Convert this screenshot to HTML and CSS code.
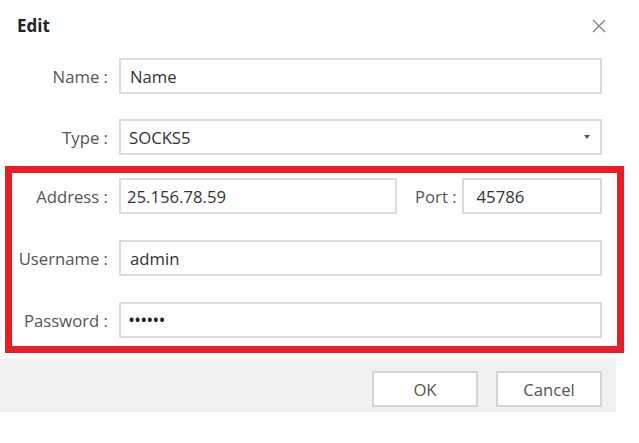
FILE: index.html
```html
<!DOCTYPE html>
<html>
<head>
<meta charset="utf-8">
<link rel="stylesheet" href="styles.css">
</head>
<body>
<div class="dialog">
  <div class="titlebar">
    <span class="title">Edit</span>
    <svg class="close" width="14" height="14" viewBox="0 0 14 14"><path d="M1 1L13 13M13 1L1 13" stroke="#808080" stroke-width="1.3" fill="none"/></svg>
  </div>
  <div class="fields">
    <div class="row">
      <label class="label">Name :</label>
      <div class="input">Name</div>
    </div>
    <div class="row">
      <label class="label">Type :</label>
      <div class="input select">SOCKS5<span class="arrow"></span></div>
    </div>
  </div>
  <div class="highlight">
    <div class="row">
      <label class="label inner">Address :</label>
      <div class="input addr">25.156.78.59</div>
      <label class="port-label">Port :</label>
      <div class="input port">45786</div>
    </div>
    <div class="row">
      <label class="label inner">Username :</label>
      <div class="input">admin</div>
    </div>
    <div class="row">
      <label class="label inner">Password :</label>
      <div class="input pass">••••••</div>
    </div>
  </div>
  <div class="footer">
    <button class="btn">OK</button>
    <button class="btn">Cancel</button>
  </div>
</div>
</body>
</html>
```
FILE: styles.css
```css
html, body {
  margin: 0;
  padding: 0;
  background: #fff;
}
body {
  font-family: "Open Sans", "Noto Sans", sans-serif;
  font-size: 16.7px;
  color: #333;
}
.dialog {
  width: 639px;
  height: 443px;
  box-sizing: border-box;
}
.titlebar {
  height: 58px;
  box-sizing: border-box;
  padding: 14px 33px 0 17px;
  display: flex;
  justify-content: space-between;
  align-items: flex-start;
}
.title {
  font-weight: 700;
  font-size: 17px;
  line-height: 24px;
  color: #222;
}
.close {
  margin-top: 5px;
}
.fields {
  padding-right: 37px;
}
.row {
  display: flex;
  align-items: center;
  height: 36px;
}
.row + .row {
  margin-top: 25px;
}
.highlight .row + .row {
  margin-top: 26px;
}
.label {
  width: 108px;
  margin-right: 11px;
  text-align: right;
  color: #555;
  flex: none;
}
.label.inner {
  width: 96px;
}
.input {
  flex: 1;
  height: 36px;
  box-sizing: border-box;
  border: 2px solid #dcdcdc;
  background: #fff;
  padding-left: 9px;
  display: flex;
  align-items: center;
  color: #333;
  position: relative;
}
.select {
  padding-left: 8px;
}
.arrow {
  position: absolute;
  right: 10px;
  top: 14px;
  width: 0;
  height: 0;
  border-left: 3px solid transparent;
  border-right: 3px solid transparent;
  border-top: 4px solid #555;
}
.highlight {
  margin: 11px 15px 0 5px;
  border: 7px solid #ec1c24;
  padding: 5px 15px 8px 0;
}
.addr {
  flex: none;
  width: 278px;
  padding-left: 6px;
}
.port-label {
  margin-left: 18px;
  margin-right: 5px;
  color: #555;
}
.port {
  padding-left: 13px;
}
.pass {
  font-size: 13.5px;
  font-weight: 700;
  letter-spacing: 1px;
  padding-left: 8px;
  color: #222;
}
.footer {
  margin-top: 5px;
  width: 616px;
  height: 54px;
  box-sizing: border-box;
  background: #f0f0f0;
  border-top: 1px solid #f6f6f6;
  display: flex;
  justify-content: flex-end;
  gap: 18px;
  padding: 12px 14px 0 0;
}
.btn {
  width: 106px;
  height: 36px;
  background: #fff;
  border: 2px solid #d4d4d4;
  font-family: "Open Sans", "Noto Sans", sans-serif;
  font-size: 16.7px;
  color: #555;
  padding: 0;
}
```
